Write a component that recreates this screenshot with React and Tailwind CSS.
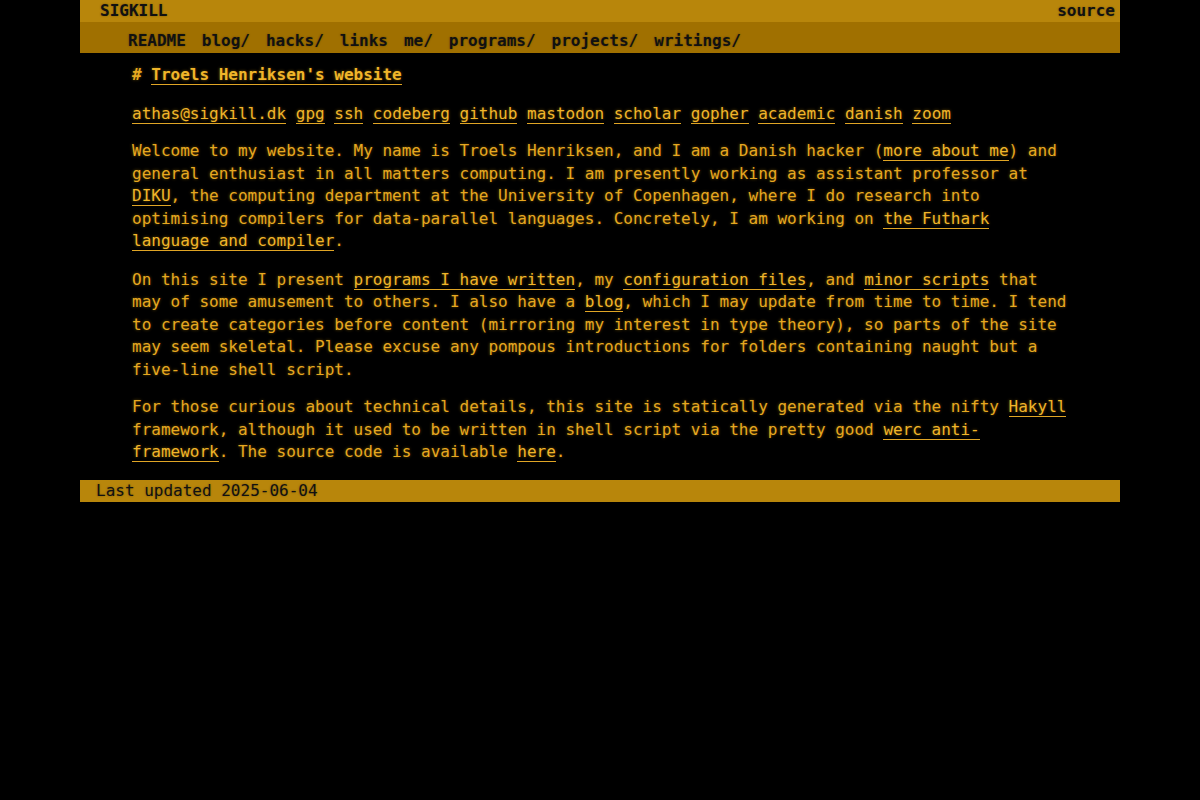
import React from "react";

const A = ({ children }) => (
  <a href="#" className="border-b border-[#e0a525] text-[#f0b52a] no-underline">
    {children}
  </a>
);

const nav = ["README", "blog/", "hacks/", "links", "me/", "programs/", "projects/", "writings/"];
const contacts = ["athas@sigkill.dk", "gpg", "ssh", "codeberg", "github", "mastodon", "scholar", "gopher", "academic", "danish", "zoom"];

export default function App() {
  return (
    <div className="min-h-[800px] bg-black font-['DejaVu_Sans_Mono',monospace] text-[16px] leading-[22.5px]">
      <div className="mx-auto w-[1040px]">
        <header>
          <div className="flex h-[22px] items-center justify-between bg-[#b8860b] pl-[20px] pr-[5px] font-bold text-[#111] [text-shadow:0_0_2px_rgba(0,0,0,0.35)]">
            <span>SIGKILL</span>
            <span>source</span>
          </div>
          <nav className="flex h-[31px] gap-[16px] bg-[#a07000] pt-[8px] pl-[48px] font-bold text-[#111] [text-shadow:0_0_2px_rgba(0,0,0,0.35)]">
            {nav.map((n) => (
              <span key={n}>{n}</span>
            ))}
          </nav>
        </header>

        <main className="px-[52px] pt-[11px] pb-[16.5px] text-[#e6a820] [text-shadow:0_0_3px_rgba(184,134,11,0.6)]">
          <h1 className="mb-[16px] font-bold">
            # <A>Troels Henriksen's website</A>
          </h1>
          <p className="mb-[15px]">
            {contacts.map((c, i) => (
              <React.Fragment key={c}>
                {i > 0 && " "}
                <A>{c}</A>
              </React.Fragment>
            ))}
          </p>
          <p className="mb-[16px]">
            Welcome to my website. My name is Troels Henriksen, and I am a Danish hacker (<A>more about me</A>) and
            general enthusiast in all matters computing. I am presently working as assistant professor at{" "}
            <A>DIKU</A>, the computing department at the University of Copenhagen, where I do research into
            optimising compilers for data-parallel languages. Concretely, I am working on{" "}
            <A>the Futhark language and compiler</A>.
          </p>
          <p className="mb-[15px]">
            On this site I present <A>programs I have written</A>, my <A>configuration files</A>, and{" "}
            <A>minor scripts</A> that may of some amusement to others. I also have a <A>blog</A>, which I may update
            from time to time. I tend to create categories before content (mirroring my interest in type theory), so
            parts of the site may seem skeletal. Please excuse any pompous introductions for folders containing naught
            but a five-line shell script.
          </p>
          <p>
            For those curious about technical details, this site is statically generated via the nifty{" "}
            <A>Hakyll</A> framework, although it used to be written in shell script via the pretty good{" "}
            <A>werc anti-framework</A>. The source code is available <A>here</A>.
          </p>
        </main>

        <footer className="flex h-[22px] items-center bg-[#b8860b] pl-[16px] text-[#111] [text-shadow:0_0_2px_rgba(0,0,0,0.35)]">
          Last updated 2025-06-04
        </footer>
      </div>
    </div>
  );
}
